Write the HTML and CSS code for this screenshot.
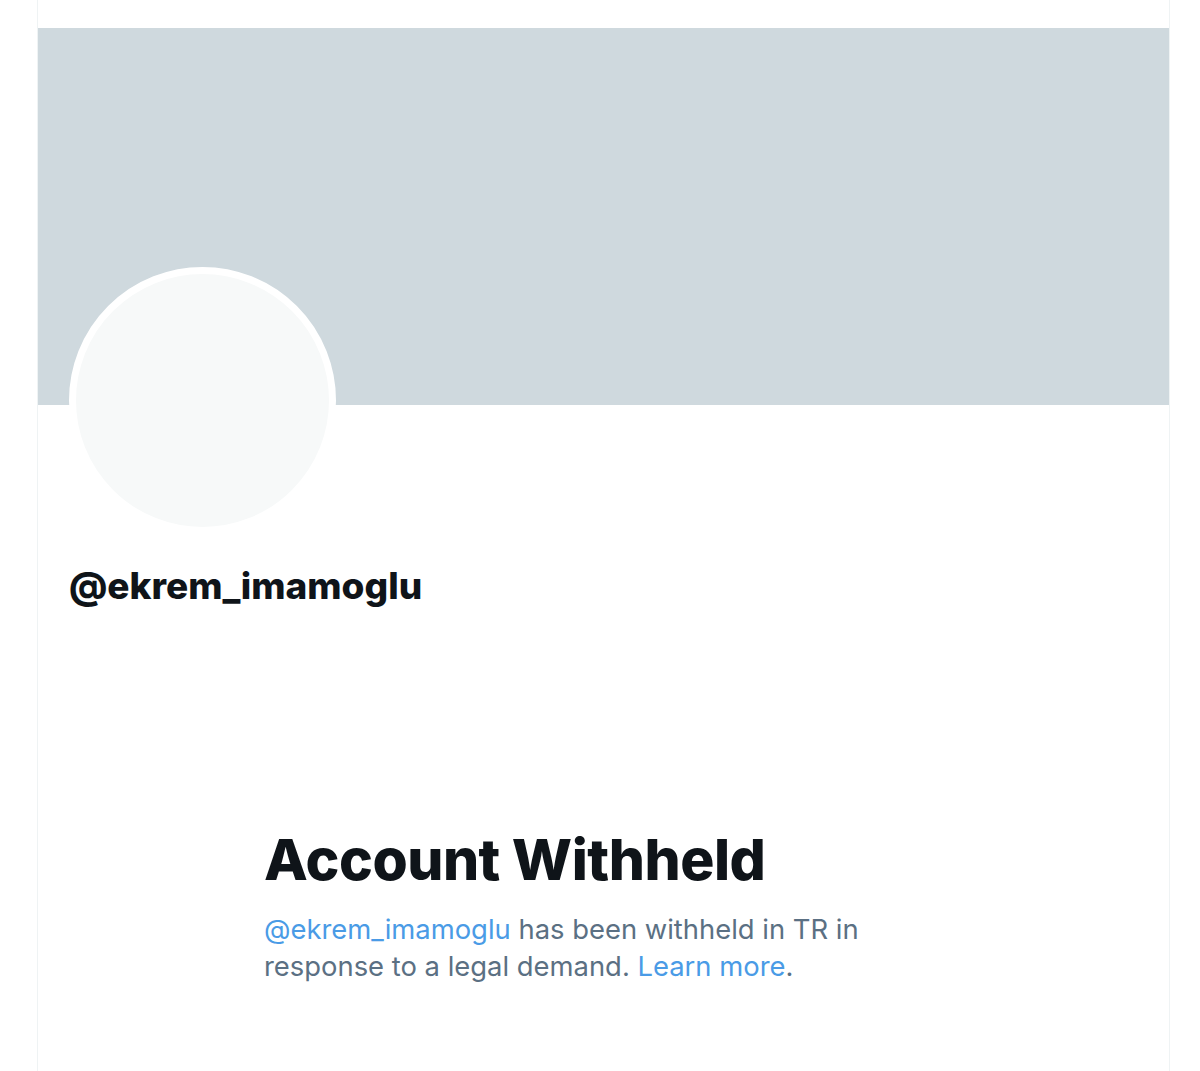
FILE: index.html
```html
<!DOCTYPE html>
<html>
<head>
<meta charset="utf-8">
<link rel="stylesheet" href="styles.css">
</head>
<body>
<main class="column">
  <div class="banner"></div>
  <div class="profile">
    <div class="avatar"></div>
    <div class="handle">@ekrem_imamoglu</div>
  </div>
  <section class="notice">
    <h1 class="notice-title">Account Withheld</h1>
    <p class="notice-text"><span class="link">@ekrem_imamoglu</span> has been withheld in TR in response to a legal demand. <span class="link">Learn more</span>.</p>
  </section>
</main>
</body>
</html>
```
FILE: styles.css
```css
html, body {
  margin: 0;
  padding: 0;
  background: #ffffff;
  height: 100%;
}
body {
  font-family: Inter, "Liberation Sans", sans-serif;
  overflow: hidden;
}
.column {
  margin-left: 37px;
  width: 1131px;
  min-height: 1071px;
  border-left: 1px solid #eff3f4;
  border-right: 1px solid #eff3f4;
  padding-top: 28px;
  box-sizing: content-box;
}
.banner {
  height: 377px;
  background: #cfd9de;
}
.profile {
  padding-left: 31px;
}
.avatar {
  width: 253px;
  height: 253px;
  border-radius: 50%;
  background: #f7f9f9;
  border: 7px solid #ffffff;
  margin-top: -138px;
}
.handle {
  margin-top: 30px;
  font-size: 37px;
  font-weight: 800;
  color: #0f1419;
  line-height: 44px;
}
.notice {
  padding-left: 226px;
  margin-top: 216px;
  width: 620px;
}
.notice-title {
  margin: 0;
  font-size: 57px;
  font-weight: 800;
  color: #0f1419;
  line-height: 72px;
  letter-spacing: -0.5px;
}
.notice-text {
  margin: 15px 0 0;
  font-size: 27.4px;
  line-height: 37px;
  color: #5b7083;
}
.link {
  color: #4a9be6;
}
```
